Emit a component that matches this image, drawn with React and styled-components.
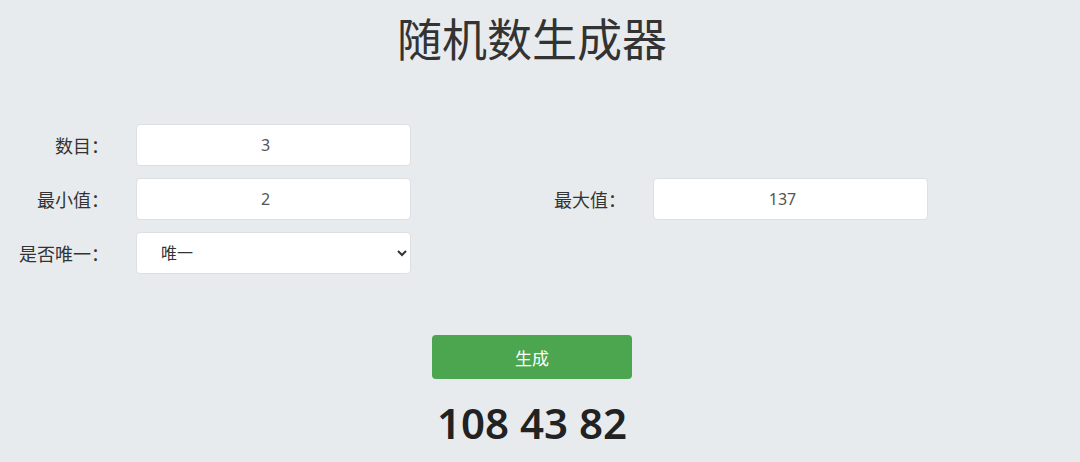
import React, { useState } from "react";
import styled, { createGlobalStyle } from "styled-components";

const GlobalStyle = createGlobalStyle`
    html, body {
        margin: 0;
        padding: 0;
        background: #e8ebee;
    }
    body {
        font-family: "Noto Sans", "Noto Sans CJK SC", sans-serif;
        color: #333;
    }
`

const Page = styled.div`
    width: 1064px;
    height: 462px;
    display: flex;
    flex-direction: column;
    align-items: center;
    overflow: hidden;
`
const Title = styled.h1`
    font-size: 45px;
    font-weight: 400;
    margin: 10px 0 0;
    line-height: 60px;
    color: #333;
`
const Form = styled.div`
    align-self: flex-start;
    margin-top: 54px;
    display: grid;
    grid-template-columns: 120px 275px 210px 275px;
    column-gap: 16px;
    row-gap: 12px;
    align-items: center;
`
const Label = styled.label`
    text-align: right;
    padding-right: 11px;
    font-size: 18px;
    color: #333;
`
const Input = styled.input`
    box-sizing: border-box;
    width: 275px;
    height: 42px;
    border: 1px solid #dcdfe3;
    border-radius: 4px;
    background: #fff;
    padding: 0 16px 0 0;
    text-align: center;
    font-family: "Noto Sans", "Noto Sans CJK SC", sans-serif;
    font-size: 16px;
    color: #555;
    outline: none;
`
const Select = styled.select`
    box-sizing: border-box;
    width: 275px;
    height: 42px;
    border: 1px solid #dcdfe3;
    border-radius: 4px;
    background: #fff;
    padding: 0 8px 0 20px;
    font-family: "Noto Sans", "Noto Sans CJK SC", sans-serif;
    font-size: 16px;
    color: #333;
    outline: none;
`
const Button = styled.button`
    margin-top: 61px;
    width: 200px;
    height: 44px;
    border: none;
    border-radius: 4px;
    background: #4ca64f;
    color: #fff;
    font-family: "Noto Sans", "Noto Sans CJK SC", sans-serif;
    font-size: 17px;
    cursor: pointer;
`
const Result = styled.div`
    margin-top: 14px;
    font-size: 42px;
    font-weight: 600;
    line-height: 60px;
    color: #222;
`

const App = () => {
    const [count, setCount] = useState("3")
    const [min, setMin] = useState("2")
    const [max, setMax] = useState("137")
    const [unique, setUnique] = useState("yes")

    return (
        <Page>
            <GlobalStyle />
            <Title>随机数生成器</Title>
            <Form>
                <Label>数目：</Label>
                <Input value={count} onChange={e => setCount(e.target.value)} />
                <span />
                <span />
                <Label>最小值：</Label>
                <Input value={min} onChange={e => setMin(e.target.value)} />
                <Label>最大值：</Label>
                <Input value={max} onChange={e => setMax(e.target.value)} />
                <Label>是否唯一：</Label>
                <Select value={unique} onChange={e => setUnique(e.target.value)}>
                    <option value="yes">唯一</option>
                    <option value="no">不唯一</option>
                </Select>
            </Form>
            <Button>生成</Button>
            <Result>108 43 82</Result>
        </Page>
    )
}

export default App;
